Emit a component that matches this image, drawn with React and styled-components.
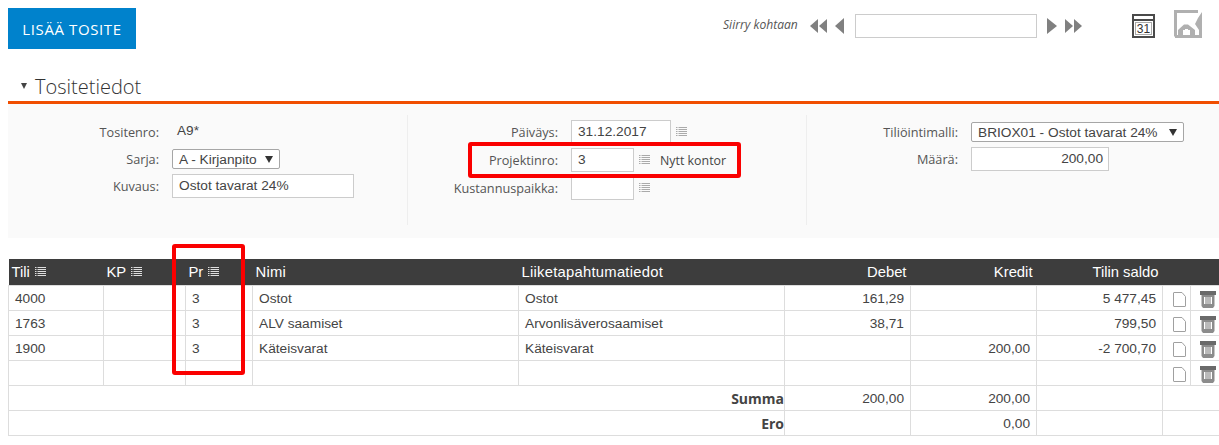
import React from 'react';
import styled, { createGlobalStyle } from 'styled-components';

const GlobalStyle = createGlobalStyle`
  html, body {
    margin: 0;
    padding: 0;
    background: #fff;
    overflow: hidden;
  }
  * { box-sizing: border-box; }
`;

const Page = styled.div`
  position: relative;
  width: 1219px;
  height: 445px;
  padding: 8px 0 0 8px;
  font-family: "Open Sans", "Liberation Sans", sans-serif;
  color: #444;
`;

const TopBar = styled.div`
  display: flex;
  align-items: flex-start;
  height: 41px;
`;

const AddButton = styled.button`
  width: 128px;
  height: 41px;
  border: none;
  background: #0082cc;
  color: #fff;
  font-family: "Open Sans", sans-serif;
  font-size: 15px;
  letter-spacing: 0.6px;
  padding: 0;
`;

const Pager = styled.div`
  display: flex;
  align-items: center;
  margin-left: 587px;
  margin-top: 6px;
  height: 24px;
`;

const PagerLabel = styled.span`
  width: 87px;
  margin-top: -3px;
  font-size: 12.1px;
  font-style: italic;
  color: #555;
`;

const PagerInput = styled.div`
  width: 182px;
  height: 24px;
  margin: 0 10px 0 11px;
  border: 1px solid #ccc;
  background: #fff;
`;

const ArrowIcon = styled.svg`
  display: block;
  flex: none;
  margin-top: -1px;
  margin-left: ${(p) => p.$gap || 0}px;
`;

const ToolIcon = styled.svg`
  display: block;
  flex: none;
  margin-left: ${(p) => p.$gap}px;
  margin-top: ${(p) => p.$top}px;
`;

const SectionHead = styled.div`
  display: flex;
  align-items: center;
  height: 29px;
  margin-top: 23px;
  padding-left: 13px;
  gap: 8px;
  font-size: 20px;
  font-weight: 300;
  color: #333;
`;

const Caret = styled.span`
  width: 0;
  height: 0;
  border-left: 3.5px solid transparent;
  border-right: 3.5px solid transparent;
  border-top: 6px solid #444;
  margin-top: -1px;
`;

const FormPanel = styled.div`
  display: grid;
  grid-template-columns: 399px 399px 1fr;
  height: 137px;
  border-top: 3px solid #f04e00;
  background: #fafafa;
  padding-top: 11px;
`;

const FormCol = styled.div`
  display: flex;
  flex-direction: column;
  height: 110px;
  gap: ${(p) => p.$gap}px;
  padding-top: ${(p) => p.$top}px;
  padding-left: ${(p) => p.$indent || 0}px;
  border-left: 1px solid ${(p) => (p.$divided ? '#eee' : 'transparent')};
`;

const Field = styled.div`
  display: flex;
  align-items: center;
  min-height: 20px;
`;

const Label = styled.span`
  width: 150px;
  margin-right: 13px;
  text-align: right;
  font-size: 12.7px;
  color: #555;
`;

const Static = styled.span`
  height: 24px;
  line-height: 22px;
  font-family: "Liberation Sans", sans-serif;
  font-size: 13.6px;
  margin-left: 5px;
`;

const TextInput = styled.div`
  width: ${(p) => p.$width}px;
  height: 24px;
  padding-left: 6px;
  border: 1px solid #ccc;
  background: #fff;
  font-family: "Liberation Sans", sans-serif;
  font-size: 13.7px;
  line-height: 22px;
  color: #444;
  text-align: ${(p) => p.$align || 'left'};
  padding-right: ${(p) => (p.$align ? '5px' : '0')};
`;

const SelectBox = styled.div`
  display: flex;
  align-items: center;
  justify-content: space-between;
  width: ${(p) => p.$width}px;
  height: 20px;
  padding: 0 6px;
  border: 1px solid #a6a6a6;
  border-radius: 2px;
  background: #fff;
  font-family: "Liberation Sans", sans-serif;
  font-size: 13.7px;
  color: #444;
`;

const SelectArrow = styled.span`
  width: 0;
  height: 0;
  border-left: 4.5px solid transparent;
  border-right: 4.5px solid transparent;
  border-top: 7px solid #333;
`;

const ProjectName = styled.span`
  margin-left: 10px;
  font-size: 12.4px;
  color: #444;
`;

const Ledger = styled.table`
  width: 1211px;
  margin-top: 21px;
  border-collapse: collapse;
  table-layout: fixed;
  font-family: "Liberation Sans", sans-serif;
  font-size: 13.7px;
  color: #444;
`;

const HeadRow = styled.tr`
  height: 26px;
  background: #3d3d3d;
`;

const HeadCell = styled.th`
  padding: 1px 4px 0 3px;
  font-weight: normal;
  font-size: 14.8px;
  letter-spacing: ${(p) => (p.$spread ? '0.25px' : '0')};
  color: #fff;
  text-align: ${(p) => (p.$right ? 'right' : 'left')};
`;

const HeadInner = styled.span`
  display: inline-flex;
  align-items: center;
  gap: 5px;
`;

const Row = styled.tr`
  height: 25px;
`;

const Cell = styled.td`
  padding: 1px ${(p) => (p.$tight ? 0 : 6)}px 0;
  border: 1px solid #ddd;
  text-align: ${(p) => (p.$right ? 'right' : 'left')};
  font-weight: ${(p) => (p.$total ? 700 : 400)};
  font-family: ${(p) => (p.$total ? '"Open Sans", sans-serif' : 'inherit')};
  font-size: ${(p) => (p.$total ? '14px' : 'inherit')};
  white-space: nowrap;

  &:last-child {
    border-right: none;
  }
`;

const IconCell = styled.td`
  padding: 3px 0 0 6px;
  border: 1px solid #ddd;

  &:last-child {
    border-right: none;
  }

  svg {
    display: block;
    margin: 0 auto;
  }
`;

const Callout = styled.div`
  position: absolute;
  left: ${(p) => p.$x}px;
  top: ${(p) => p.$y}px;
  width: ${(p) => p.$w}px;
  height: ${(p) => p.$h}px;
  border: 4px solid #fa0000;
  border-radius: 3px;
  pointer-events: none;
`;

const ListIcon = ({ color = '#aaa' }) => (
  <svg width="11" height="10" viewBox="0 0 11 10">
    {[0, 2, 4, 6, 8].map((y) => (
      <g key={y} fill={color}>
        <rect x="0" y={y} width="1.5" height="1" />
        <rect x="2.5" y={y} width="8.5" height="1" />
      </g>
    ))}
  </svg>
);

const FormList = styled.span`
  display: inline-flex;
  margin-left: 5px;
`;

const SingleLeft = ({ gap }) => (
  <ArrowIcon $gap={gap} width="9" height="16" viewBox="0 0 9 16">
    <polygon points="9,0 9,16 0,8" fill="#808080" />
  </ArrowIcon>
);

const SingleRight = ({ gap }) => (
  <ArrowIcon $gap={gap} width="10" height="16" viewBox="0 0 10 16">
    <polygon points="0,0 0,16 10,8" fill="#808080" />
  </ArrowIcon>
);

const DoubleLeft = () => (
  <ArrowIcon width="17" height="16" viewBox="0 0 17 16">
    <polygon points="8,1 8,15 0,8" fill="#808080" />
    <polygon points="17,1 17,15 9,8" fill="#808080" />
  </ArrowIcon>
);

const DoubleRight = ({ gap }) => (
  <ArrowIcon $gap={gap} width="17" height="16" viewBox="0 0 17 16">
    <polygon points="0,1 0,15 8,8" fill="#808080" />
    <polygon points="9,1 9,15 17,8" fill="#808080" />
  </ArrowIcon>
);

const CalendarIcon = () => (
  <ToolIcon $gap={50} $top={-1} width="23" height="24" viewBox="0 0 23 24">
    <rect x="0" y="0" width="23" height="24" fill="#4a4a4a" />
    <rect x="2" y="2" width="19" height="3" fill="#fff" />
    <rect x="2" y="7" width="19" height="15" fill="#fff" />
    <rect x="3.5" y="8.5" width="16" height="12" fill="#fff" stroke="#aaa" />
    <text x="11.5" y="19" textAnchor="middle" fontFamily="Liberation Sans, sans-serif" fontSize="12" fill="#333">31</text>
  </ToolIcon>
);

const HouseIcon = () => (
  <ToolIcon $gap={19} $top={-5} width="28" height="28" viewBox="0 0 28 28">
    <path d="M1.5 26.5V1.5H24" fill="none" stroke="#b0b0b0" strokeWidth="3" />
    <path d="M1 26.5H27" fill="none" stroke="#b0b0b0" strokeWidth="3" />
    <path d="M28 2V28H25V20L21 14L24 8Z" fill="#b0b0b0" />
    <path d="M4 26V20L10 14.5H14L21 20V26H16V20H9V26Z" fill="#b0b0b0" />
    <rect x="11" y="19" width="3" height="2" fill="#fff" />
  </ToolIcon>
);

const DocIcon = () => (
  <svg width="13" height="15" viewBox="0 0 13 15">
    <path d="M0.5 1Q0.5 0.5 1 0.5H9L12.5 4.5V14Q12.5 14.5 12 14.5H1Q0.5 14.5 0.5 14Z" fill="#fff" stroke="#a0a0a0" />
  </svg>
);

const TrashIcon = () => (
  <svg width="16" height="17" viewBox="0 0 16 17">
    <rect x="0" y="0" width="16" height="4" fill="#6a6a6a" />
    <path d="M1.5 4H14.5V15L13 17H3L1.5 15Z" fill="#8c8c8c" />
    <rect x="4" y="6" width="8" height="7" fill="#fff" />
    <rect x="5.5" y="6" width="1" height="7" fill="#777" />
    <rect x="7.5" y="6" width="1" height="7" fill="#777" />
    <rect x="9.5" y="6" width="1" height="7" fill="#777" />
  </svg>
);

const columnWidths = [95, 82, 67, 266, 266, 126, 126, 126, 28, 29];

const rows = [
  { tili: '4000', pr: '3', nimi: 'Ostot', tieto: 'Ostot', debet: '161,29', kredit: '', saldo: '5 477,45' },
  { tili: '1763', pr: '3', nimi: 'ALV saamiset', tieto: 'Arvonlisäverosaamiset', debet: '38,71', kredit: '', saldo: '799,50' },
  { tili: '1900', pr: '3', nimi: 'Käteisvarat', tieto: 'Käteisvarat', debet: '', kredit: '200,00', saldo: '-2 700,70' },
  { tili: '', pr: '', nimi: '', tieto: '', debet: '', kredit: '', saldo: '' },
];

const App = () => (
  <Page>
    <GlobalStyle />
    <TopBar>
      <AddButton>LISÄÄ TOSITE</AddButton>
      <Pager>
        <PagerLabel>Siirry kohtaan</PagerLabel>
        <DoubleLeft />
        <SingleLeft gap={8} />
        <PagerInput />
        <SingleRight />
        <DoubleRight gap={8} />
        <CalendarIcon />
        <HouseIcon />
      </Pager>
    </TopBar>

    <SectionHead>
      <Caret />
      Tositetiedot
    </SectionHead>
    <FormPanel>
      <FormCol $gap={5} $top={5}>
        <Field>
          <Label>Tositenro:</Label>
          <Static>A9*</Static>
        </Field>
        <Field>
          <Label>Sarja:</Label>
          <SelectBox $width={108}>
            A - Kirjanpito
            <SelectArrow />
          </SelectBox>
        </Field>
        <Field>
          <Label>Kuvaus:</Label>
          <TextInput $width={182}>Ostot tavarat 24%</TextInput>
        </Field>
      </FormCol>
      <FormCol $gap={4} $top={5} $divided>
        <Field>
          <Label>Päiväys:</Label>
          <TextInput $width={100}>31.12.2017</TextInput>
          <FormList><ListIcon /></FormList>
        </Field>
        <Field>
          <Label>Projektinro:</Label>
          <TextInput $width={63}>3</TextInput>
          <FormList><ListIcon /></FormList>
          <ProjectName>Nytt kontor</ProjectName>
        </Field>
        <Field>
          <Label>Kustannuspaikka:</Label>
          <TextInput $width={63} />
          <FormList><ListIcon /></FormList>
        </Field>
      </FormCol>
      <FormCol $gap={5} $top={7} $indent={1} $divided>
        <Field>
          <Label>Tiliöintimalli:</Label>
          <SelectBox $width={213}>
            BRIOX01 - Ostot tavarat 24%
            <SelectArrow />
          </SelectBox>
        </Field>
        <Field>
          <Label>Määrä:</Label>
          <TextInput $width={138} $align="right">200,00</TextInput>
        </Field>
      </FormCol>
    </FormPanel>

    <Ledger>
      <colgroup>
        {columnWidths.map((w, i) => <col key={i} style={{ width: w }} />)}
      </colgroup>
      <thead>
        <HeadRow>
          <HeadCell><HeadInner>Tili <ListIcon color="#ddd" /></HeadInner></HeadCell>
          <HeadCell><HeadInner>KP <ListIcon color="#ddd" /></HeadInner></HeadCell>
          <HeadCell><HeadInner>Pr <ListIcon color="#ddd" /></HeadInner></HeadCell>
          <HeadCell $spread>Nimi</HeadCell>
          <HeadCell $spread>Liiketapahtumatiedot</HeadCell>
          <HeadCell $right>Debet</HeadCell>
          <HeadCell $right>Kredit</HeadCell>
          <HeadCell $right>Tilin saldo</HeadCell>
          <HeadCell />
          <HeadCell />
        </HeadRow>
      </thead>
      <tbody>
        {rows.map((r, i) => (
          <Row key={i}>
            <Cell>{r.tili}</Cell>
            <Cell />
            <Cell>{r.pr}</Cell>
            <Cell>{r.nimi}</Cell>
            <Cell>{r.tieto}</Cell>
            <Cell $right>{r.debet}</Cell>
            <Cell $right>{r.kredit}</Cell>
            <Cell $right>{r.saldo}</Cell>
            <IconCell><DocIcon /></IconCell>
            <IconCell><TrashIcon /></IconCell>
          </Row>
        ))}
        <Row>
          <Cell colSpan={5} $right $tight $total>Summa</Cell>
          <Cell $right>200,00</Cell>
          <Cell $right>200,00</Cell>
          <Cell />
          <Cell colSpan={2} />
        </Row>
        <Row>
          <Cell colSpan={5} $right $tight $total>Ero</Cell>
          <Cell />
          <Cell $right>0,00</Cell>
          <Cell />
          <Cell colSpan={2} />
        </Row>
      </tbody>
    </Ledger>

    <Callout $x={468} $y={142} $w={273} $h={36} />
    <Callout $x={172} $y={244} $w={73} $h={131} />
  </Page>
);

export default App;
